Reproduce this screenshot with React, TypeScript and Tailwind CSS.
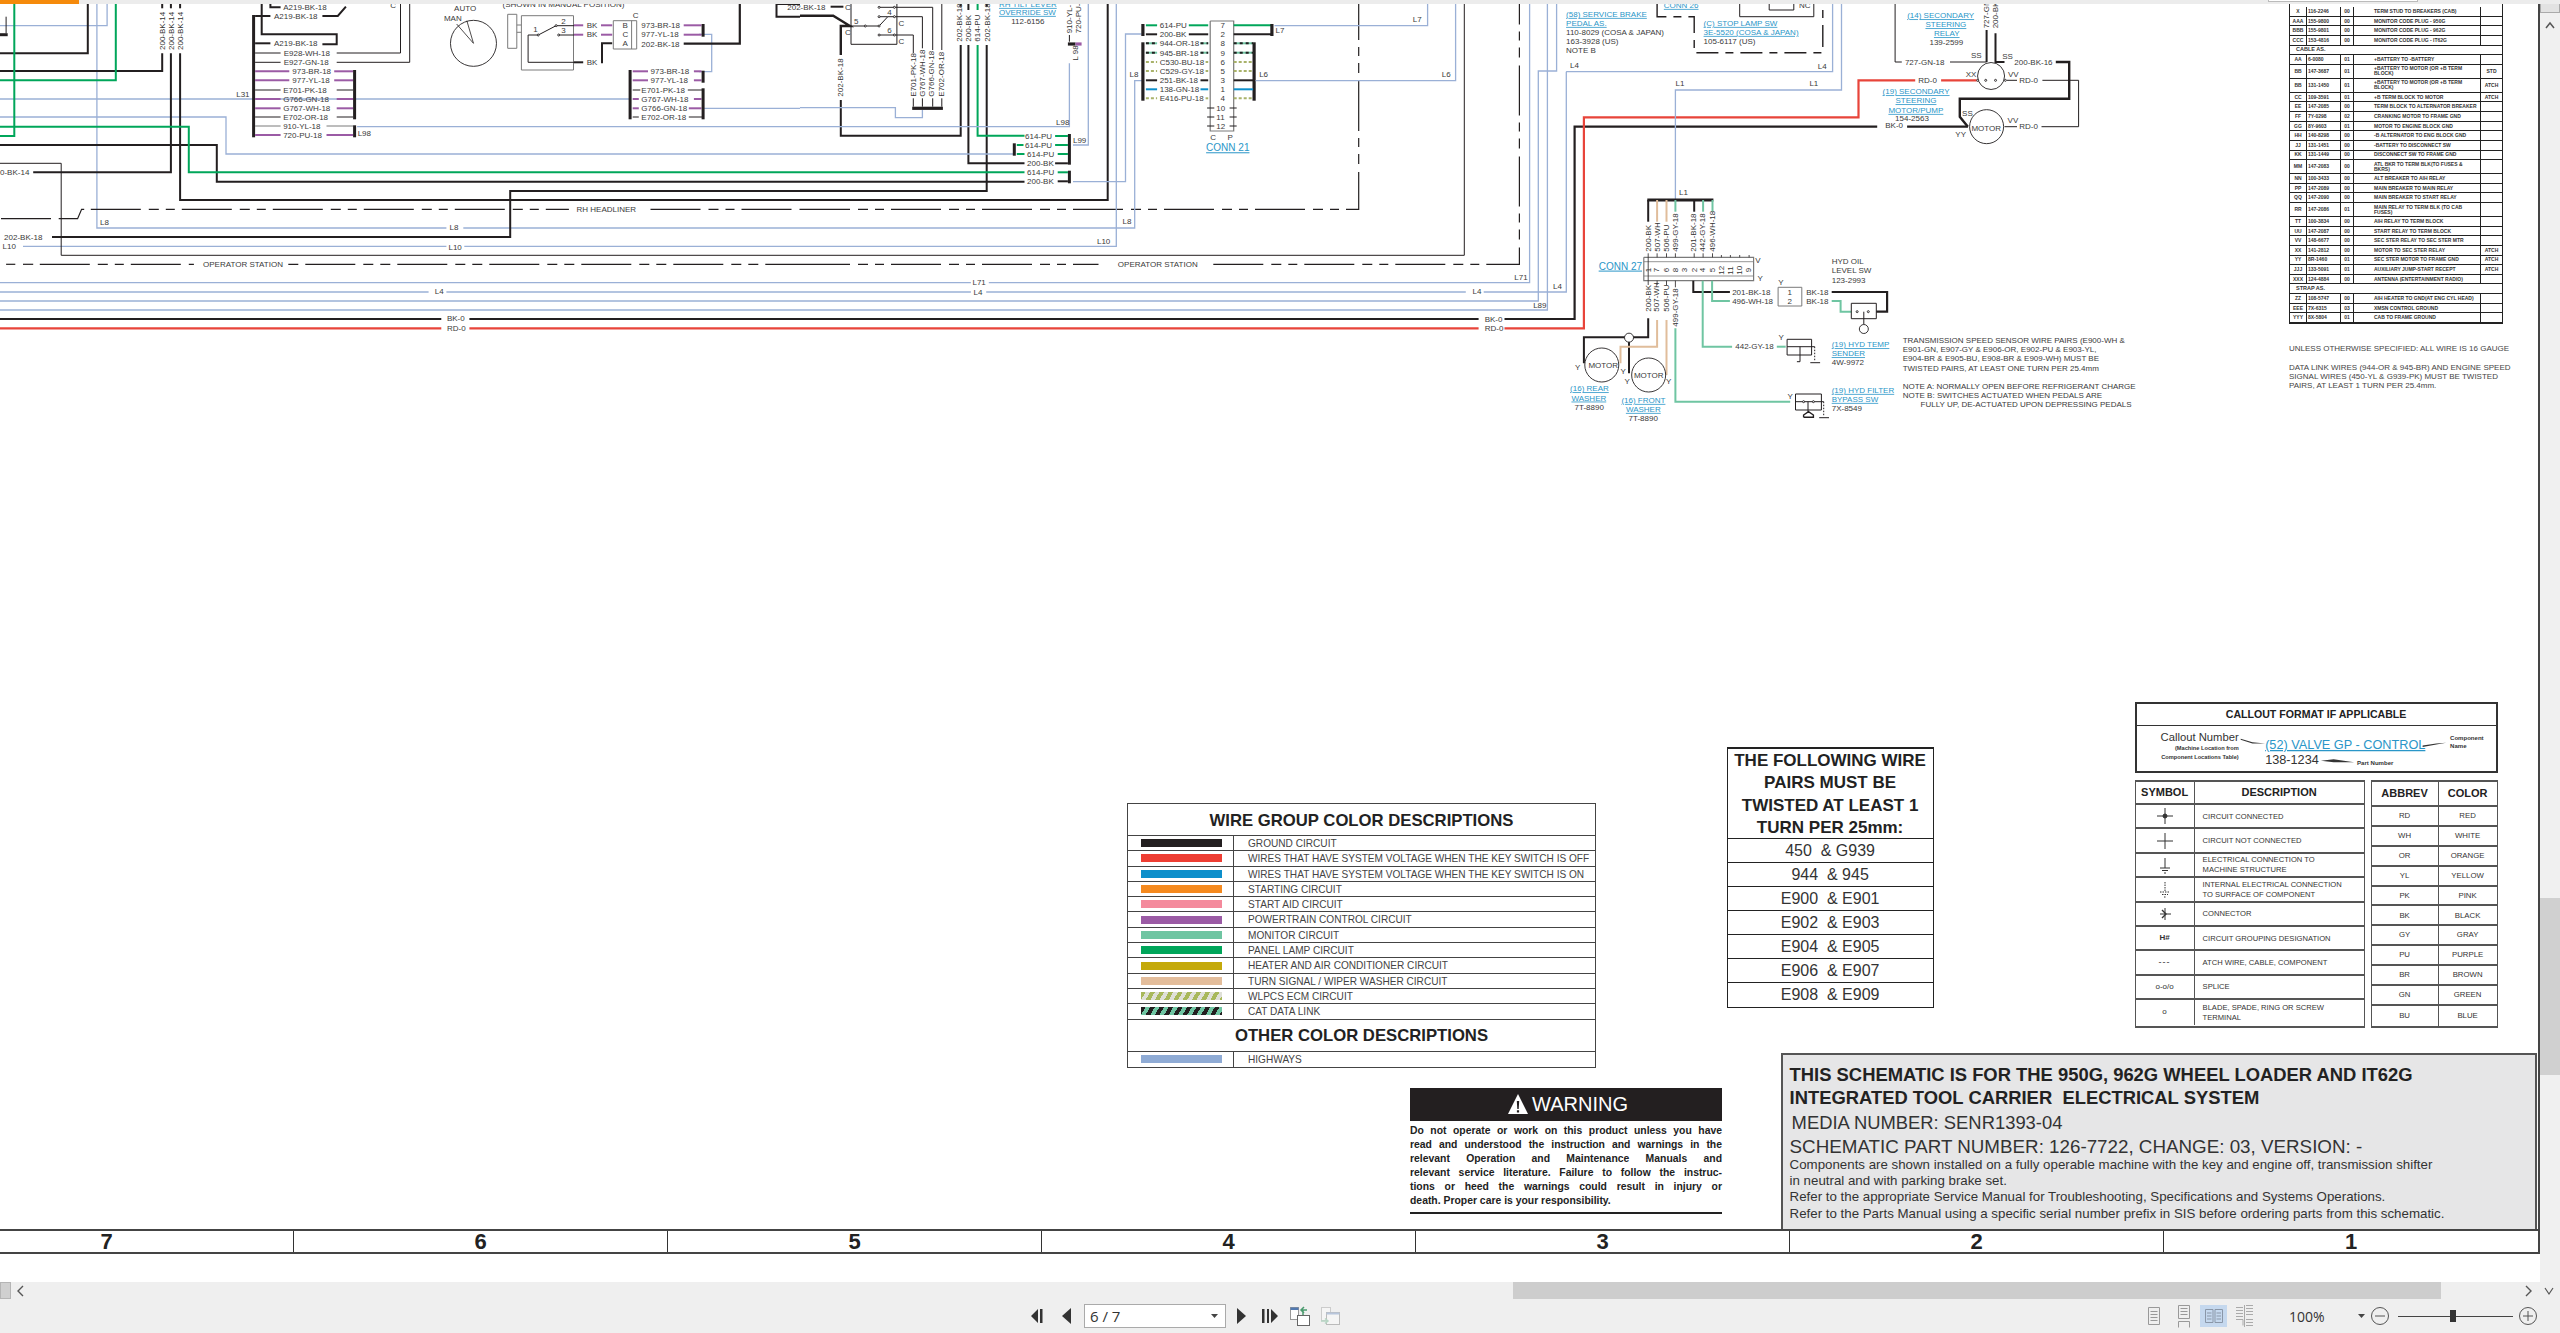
import React from "react";

type Z = 1 | 2 | 3;
const map: Record<Z, [number, number]> = { 1: [0, 1.96], 2: [800, 1.96], 3: [1500, 2.24] };
const px = (z: Z, x: number) => map[z][0] + x / map[z][1];
const py = (y: number) => y / 3;

const H = "#9ab0d6", K = "#231f20", G = "#00a65a", P = "#9b5ba5", R = "#e8443a", T = "#e0bd9b", M = "#6fc5a2", B = "#0d8fcb", O = "#a9b26a", D = "#7a7a7a";

type W = [Z, string, number, number[], string?];
const wires: W[] = [
  [1, H, 1.3, [190, 12, 190, 684, 875, 684]],
  [1, H, 1.3, [908, 684, 1568, 684]],
  [1, H, 1.3, [210, 12, 210, 77, 0, 77]],
  [1, H, 1.3, [0, 297, 1235, 297]],
  [1, H, 1.3, [0, 351, 443, 351, 443, 462, 1568, 462]],
  [1, H, 1.3, [700, 380, 1568, 380]],
  [1, H, 1.3, [45, 739, 875, 739]],
  [1, H, 1.3, [910, 739, 1568, 739]],
  [1, H, 1.3, [0, 848, 1568, 848]],
  [1, H, 1.3, [0, 876, 840, 876]],
  [1, H, 1.3, [875, 876, 1568, 876]],
  [1, H, 1.3, [0, 903, 1568, 903]],
  [1, H, 1.3, [0, 930, 1568, 930]],
  [1, H, 1.3, [1380, 325, 1568, 325]],
  [1, H, 1.3, [1370, 103, 1395, 103, 1395, 215, 1370, 215]],
  [1, K, 1, [0, 490, 120, 490, 120, 766, 1568, 766]],
  [1, K, 2, [172, 12, 172, 160, 0, 160]],
  [1, K, 1, [12, 50, 12, 100]],
  [1, K, 3, [0, 104, 15, 104]],
  [1, K, 2, [318, 12, 318, 25]],
  [1, K, 2, [335, 12, 335, 25]],
  [1, K, 2, [353, 12, 353, 25]],
  [1, K, 2, [318, 160, 318, 213, 0, 213]],
  [1, K, 2, [335, 160, 335, 517, 65, 517]],
  [1, K, 2, [353, 160, 353, 600, 1568, 600]],
  [1, K, 2, [0, 435, 425, 435, 425, 545, 1568, 545]],
  [1, K, 2, [102, 711, 1000, 711, 1000, 573, 1568, 573]],
  [1, G, 2, [28, 12, 28, 408, 0, 408]],
  [1, G, 2, [227, 12, 227, 241, 0, 241]],
  [1, G, 2, [0, 380, 370, 380, 370, 517, 1568, 517]],
  [1, K, 2.2, [0, 957, 865, 957]],
  [1, K, 2.2, [920, 957, 1568, 957]],
  [1, R, 2.2, [0, 985, 865, 985]],
  [1, R, 2.2, [920, 985, 1568, 985]],
  [1, K, 1.2, [178, 628, 1115, 628], "50 8 10 7 9 7"],
  [1, K, 1.2, [1275, 628, 1568, 628], "50 8 10 7 9 7"],
  [1, K, 1.2, [2, 656, 100, 656]],
  [1, K, 1.2, [115, 656, 152, 656, 160, 628, 165, 628]],
  [1, K, 1.2, [78, 793, 380, 793], "50 8 10 7 9 7"],
  [1, K, 1.2, [12, 793, 30, 793]],
  [1, K, 1.2, [45, 793, 65, 793]],
  [1, K, 1.2, [565, 793, 1568, 793], "10 7 50 8 10 7"],
  [1, K, 3, [497, 45, 497, 412]],
  [1, K, 2, [530, 12, 530, 22, 550, 22]],
  [1, K, 2, [513, 12, 513, 103, 660, 103, 660, 133, 632, 133]],
  [1, K, 2, [500, 48, 530, 48]],
  [1, K, 2, [632, 48, 662, 48, 678, 20]],
  [1, K, 2, [500, 130, 530, 130]],
  [1, K, 1, [500, 159, 550, 159]],
  [1, K, 1, [660, 159, 785, 159, 785, 12]],
  [1, K, 1, [500, 187, 550, 187]],
  [1, K, 1, [660, 187, 803, 187, 803, 12]],
  [1, P, 2, [500, 214, 567, 214]],
  [1, P, 2, [655, 214, 692, 214]],
  [1, P, 2, [500, 241, 567, 241]],
  [1, P, 2, [655, 241, 692, 241]],
  [1, K, 1, [500, 270, 550, 270]],
  [1, K, 1, [660, 270, 692, 270]],
  [1, P, 2, [500, 297, 550, 297]],
  [1, P, 2, [660, 297, 692, 297]],
  [1, P, 2, [500, 325, 550, 325]],
  [1, P, 2, [660, 325, 692, 325]],
  [1, K, 1, [500, 351, 550, 351]],
  [1, K, 1, [660, 351, 692, 351]],
  [1, D, 1, [500, 378, 550, 378]],
  [1, D, 1, [640, 378, 692, 378]],
  [1, P, 2, [500, 405, 550, 405]],
  [1, P, 2, [640, 405, 692, 405]],
  [1, K, 3, [695, 210, 695, 358]],
  [1, K, 3, [695, 376, 695, 412]],
  [1, D, 1, [995, 43, 1013, 43, 1013, 145, 995, 145, 995, 43]],
  [1, D, 1, [1013, 75, 1022, 75]],
  [1, D, 1, [1013, 97, 1022, 97]],
  [1, D, 1, [1022, 47, 1124, 47, 1124, 210, 1022, 210, 1022, 47]],
  [1, K, 1, [1035, 105, 1055, 105, 1090, 77, 1125, 77]],
  [1, K, 1, [1035, 105, 1035, 187, 1125, 187]],
  [1, K, 1, [1095, 105, 1125, 105]],
  [1, K, 2, [1125, 187, 1143, 187]],
  [1, P, 2, [1125, 76, 1143, 76]],
  [1, P, 2, [1178, 76, 1200, 76]],
  [1, P, 2, [1125, 104, 1143, 104]],
  [1, P, 2, [1178, 104, 1200, 104]],
  [1, K, 2, [1180, 190, 1180, 130, 1200, 130]],
  [1, D, 1, [1202, 62, 1248, 62, 1248, 147, 1202, 147, 1202, 62]],
  [1, D, 1, [1238, 62, 1238, 147]],
  [1, K, 2.2, [1340, 131, 1450, 131, 1450, 12]],
  [1, P, 2, [1340, 76, 1375, 76]],
  [1, P, 2, [1340, 104, 1375, 104]],
  [1, K, 3, [1378, 72, 1378, 110]],
  [1, K, 3, [1235, 210, 1235, 358]],
  [1, P, 2, [1240, 214, 1270, 214]],
  [1, P, 2, [1240, 241, 1270, 241]],
  [1, K, 1, [1240, 270, 1255, 270]],
  [1, P, 2, [1240, 297, 1252, 297]],
  [1, P, 2, [1240, 325, 1252, 325]],
  [1, K, 1, [1240, 351, 1252, 351]],
  [1, P, 2, [1360, 214, 1375, 214]],
  [1, P, 2, [1360, 241, 1375, 241]],
  [1, K, 1, [1348, 270, 1378, 270]],
  [1, P, 2, [1360, 297, 1375, 297]],
  [1, P, 2, [1350, 325, 1375, 325]],
  [1, K, 1, [1350, 351, 1378, 351]],
  [1, K, 3, [1378, 212, 1378, 248]],
  [1, K, 3, [1378, 265, 1378, 358]],
  [1, K, 2, [1568, 12, 1522, 12, 1522, 50, 1568, 50]],
  [2, K, 2, [60, 20, 85, 20]],
  [2, K, 2.4, [0, 47, 65, 47, 98, 78, 80, 78, 80, 165]],
  [2, K, 2, [80, 300, 80, 407, 315, 407, 315, 135]],
  [2, K, 2, [315, 12, 315, 20]],
  [2, K, 1, [100, 12, 100, 133, 190, 133, 190, 12]],
  [2, K, 1, [100, 78, 155, 78, 172, 50, 190, 50]],
  [2, K, 1, [155, 50, 172, 50]],
  [2, K, 1, [155, 105, 190, 105]],
  [2, K, 1, [155, 22, 190, 22]],
  [2, K, 1, [190, 22, 260, 22, 260, 150]],
  [2, K, 1, [260, 295, 260, 320]],
  [2, K, 1, [190, 50, 240, 50, 240, 145]],
  [2, K, 1, [240, 295, 240, 320]],
  [2, K, 1, [190, 105, 222, 105, 222, 160]],
  [2, K, 1, [222, 295, 222, 320]],
  [2, K, 1, [278, 12, 278, 150]],
  [2, K, 1, [278, 295, 278, 320]],
  [2, K, 3.2, [220, 325, 280, 325]],
  [2, H, 1.3, [0, 323, 187, 323, 187, 353, 240, 353, 240, 330]],
  [2, K, 2, [330, 12, 330, 30]],
  [2, G, 2, [348, 12, 348, 30]],
  [2, K, 2, [366, 12, 366, 20]],
  [2, K, 2, [330, 135, 330, 490, 440, 490]],
  [2, K, 2, [366, 135, 366, 573, 0, 573]],
  [2, G, 2, [348, 135, 348, 407, 440, 407]],
  [2, H, 1.3, [0, 380, 528, 380, 528, 190]],
  [2, K, 1, [528, 105, 528, 125]],
  [2, K, 3.2, [525, 132, 540, 132]],
  [2, P, 3.2, [540, 132, 552, 132]],
  [2, H, 1.3, [565, 12, 565, 435, 535, 435]],
  [2, H, 1.3, [0, 462, 418, 462]],
  [2, G, 2, [0, 517, 440, 517]],
  [2, K, 2, [0, 545, 440, 545]],
  [2, K, 2, [0, 600, 603, 600, 603, 12]],
  [2, K, 1.2, [0, 628, 1095, 628, 1095, 12], "50 8 10 7 9 7"],
  [2, H, 1.3, [0, 684, 656, 684, 656, 242, 672, 242]],
  [2, H, 1.3, [0, 739, 620, 739, 620, 12]],
  [2, K, 1, [0, 766, 1302, 766, 1302, 12]],
  [2, K, 1.2, [0, 793, 585, 793], "50 8 10 7 9 7"],
  [2, K, 1.2, [810, 793, 1410, 793, 1410, 12], "50 8 10 7 9 7"],
  [2, G, 2, [500, 408, 525, 408]],
  [2, G, 2, [500, 435, 525, 435]],
  [2, G, 2, [505, 462, 525, 462]],
  [2, K, 2, [500, 490, 525, 490]],
  [2, G, 2, [505, 517, 525, 517]],
  [2, K, 2, [505, 544, 525, 544]],
  [2, K, 3, [528, 402, 528, 494]],
  [2, K, 3, [528, 512, 528, 550]],
  [2, K, 3, [420, 430, 420, 467]],
  [2, G, 2, [425, 435, 438, 435]],
  [2, G, 2, [425, 462, 440, 462]],
  [2, H, 1.3, [535, 545, 638, 545, 638, 102, 670, 102]],
  [2, D, 1.2, [804, 63, 850, 63, 850, 393, 804, 393, 804, 63]],
  [2, K, 3.2, [672, 72, 672, 108]],
  [2, K, 3.2, [672, 127, 672, 302]],
  [2, G, 2, [678, 76, 700, 76]],
  [2, G, 2, [762, 76, 800, 76]],
  [2, K, 2, [678, 103, 700, 103]],
  [2, K, 2, [762, 103, 800, 103]],
  [2, M, 2, [678, 130, 700, 130]],
  [2, K, 2, [678, 130, 700, 130], "3 3"],
  [2, M, 2, [785, 130, 800, 130]],
  [2, K, 2, [785, 130, 800, 130], "3 3"],
  [2, M, 2, [678, 158, 700, 158]],
  [2, K, 2, [678, 158, 700, 158], "3 3"],
  [2, M, 2, [785, 158, 800, 158]],
  [2, K, 2, [785, 158, 800, 158], "3 3"],
  [2, O, 2, [678, 186, 700, 186], "3 2"],
  [2, O, 2, [795, 186, 800, 186], "3 2"],
  [2, O, 2, [678, 213, 700, 213], "3 2"],
  [2, O, 2, [795, 213, 800, 213], "3 2"],
  [2, K, 2, [678, 241, 700, 241]],
  [2, K, 2, [785, 241, 800, 241]],
  [2, B, 2, [678, 268, 700, 268]],
  [2, B, 2, [785, 268, 800, 268]],
  [2, O, 2, [678, 295, 700, 295], "3 2"],
  [2, O, 2, [795, 295, 800, 295], "3 2"],
  [2, G, 2, [850, 76, 925, 76]],
  [2, K, 2, [850, 103, 925, 103]],
  [2, K, 3.2, [925, 72, 925, 108]],
  [2, H, 1.3, [930, 77, 1230, 77, 1230, 12]],
  [2, K, 3.2, [890, 127, 890, 302]],
  [2, M, 2, [850, 130, 888, 130]],
  [2, K, 2, [850, 130, 888, 130], "3 3"],
  [2, M, 2, [850, 158, 888, 158]],
  [2, K, 2, [850, 158, 888, 158], "3 3"],
  [2, O, 2, [850, 186, 888, 186], "3 2"],
  [2, O, 2, [850, 213, 888, 213], "3 2"],
  [2, K, 2, [850, 241, 888, 241]],
  [2, B, 2, [850, 268, 888, 268]],
  [2, O, 2, [850, 295, 888, 295], "3 2"],
  [2, H, 1.3, [893, 242, 1285, 242, 1285, 12]],
  [2, K, 1, [798, 324, 812, 324]],
  [2, K, 1, [842, 324, 856, 324]],
  [2, K, 1, [798, 351, 812, 351]],
  [2, K, 1, [842, 351, 856, 351]],
  [2, K, 1, [798, 378, 812, 378]],
  [2, K, 1, [842, 378, 856, 378]],
  [2, H, 1.3, [0, 848, 335, 848]],
  [2, H, 1.3, [370, 848, 1430, 848, 1430, 12]],
  [2, H, 1.3, [0, 876, 335, 876]],
  [2, H, 1.3, [365, 876, 1305, 876]],
  [2, H, 1.3, [1340, 876, 1502, 876, 1502, 215]],
  [2, H, 1.3, [0, 903, 1447, 903, 1447, 213, 1483, 213, 1483, 12]],
  [2, H, 1.3, [0, 930, 1465, 930, 1465, 12]],
  [2, K, 2.2, [0, 957, 1330, 957]],
  [2, R, 2.2, [0, 985, 1330, 985]],
  [3, K, 2.2, [10, 957, 167, 957, 167, 380, 845, 380]],
  [3, R, 2.2, [10, 985, 188, 985, 188, 352, 803, 352, 803, 241, 930, 241]],
  [3, K, 2.2, [912, 380, 1048, 380]],
  [3, R, 2.2, [988, 241, 1068, 241]],
  [3, H, 1.3, [148, 215, 745, 215, 745, 12]],
  [3, H, 1.3, [393, 600, 393, 270, 765, 270, 765, 12]],
  [3, K, 1, [885, 12, 885, 186, 900, 186]],
  [3, K, 1, [1008, 186, 1090, 186]],
  [3, K, 2, [1090, 90, 1090, 186]],
  [3, K, 2, [1110, 100, 1110, 186, 1130, 186]],
  [3, K, 2.4, [1245, 186, 1275, 186, 1275, 296, 1030, 296, 1030, 350, 1048, 380]],
  [3, K, 1, [1135, 241, 1158, 241]],
  [3, K, 1, [1215, 241, 1296, 241, 1296, 380, 1213, 380]],
  [3, K, 1, [1130, 380, 1158, 380]],
  [3, K, 1.4, [352, 12, 352, 50, 435, 50, 435, 158, 723, 158, 723, 12], "22 7 8 7"],
  [3, K, 1, [537, 12, 537, 50, 703, 50, 703, 12]],
  [3, K, 1, [603, 12, 603, 30, 658, 30, 658, 12]],
  [3, K, 3, [330, 600, 478, 600]],
  [3, K, 2, [332, 600, 332, 665]],
  [3, T, 2, [352, 600, 352, 665]],
  [3, T, 2, [373, 600, 373, 665]],
  [3, M, 2, [393, 600, 393, 635]],
  [3, K, 2, [435, 600, 435, 635]],
  [3, M, 2, [455, 600, 455, 635]],
  [3, M, 2, [476, 600, 476, 635]],
  [3, D, 1.2, [322, 772, 568, 772, 568, 842, 322, 842, 322, 772]],
  [3, D, 0.8, [322, 785, 568, 785]],
  [3, D, 0.8, [322, 828, 568, 828]],
  [3, K, 0.8, [332, 760, 332, 772, 332, 842, 332, 855]],
  [3, K, 0.8, [352, 760, 352, 772]], [3, K, 0.8, [352, 842, 352, 855]],
  [3, K, 0.8, [373, 760, 373, 772]], [3, K, 0.8, [373, 842, 373, 855]],
  [3, K, 0.8, [393, 760, 393, 772]], [3, K, 0.8, [393, 842, 393, 862]],
  [3, K, 0.8, [435, 760, 435, 772]], [3, K, 0.8, [455, 760, 455, 772]], [3, K, 0.8, [476, 760, 476, 772]],
  [3, K, 0.8, [496, 765, 496, 772]], [3, K, 0.8, [516, 765, 516, 772]], [3, K, 0.8, [537, 765, 537, 772]], [3, K, 0.8, [558, 765, 558, 772]],
  [3, K, 2, [433, 842, 433, 876, 515, 876]],
  [3, M, 2, [454, 842, 454, 1040, 520, 1040]],
  [3, M, 2, [475, 842, 475, 903, 515, 903]],
  [3, M, 2, [620, 1040, 640, 1040]],
  [3, D, 1, [623, 862, 676, 862, 676, 918, 623, 918, 623, 862]],
  [3, K, 2.2, [743, 876, 867, 876, 867, 935, 843, 935]],
  [3, M, 2, [743, 903, 763, 903, 763, 935, 787, 935]],
  [3, K, 1, [787, 910, 843, 910, 843, 956, 787, 956, 787, 910]],
  [3, K, 1, [815, 935, 815, 973]],
  [3, K, 1, [643, 1018, 698, 1018, 698, 1065, 643, 1065, 643, 1018]],
  [3, K, 1, [643, 1040, 705, 1040]],
  [3, K, 1, [705, 1040, 705, 1085], "1.5 1.5"],
  [3, K, 1, [695, 1088, 717, 1088]],
  [3, K, 1, [672, 1040, 672, 1085, 665, 1085]],
  [3, K, 1, [662, 1182, 720, 1182, 720, 1230, 662, 1230, 662, 1182]],
  [3, K, 1, [662, 1205, 725, 1205]],
  [3, K, 1, [725, 1205, 725, 1250], "1.5 1.5"],
  [3, K, 1, [715, 1253, 737, 1253]],
  [3, K, 1, [690, 1205, 690, 1235]],
  [3, K, 1.4, [680, 1252, 702, 1252, 702, 1245, 691, 1235, 680, 1245, 680, 1252]],
  [3, M, 2, [393, 985, 393, 1205, 650, 1205]],
  [3, K, 2, [332, 955, 332, 1012, 188, 1012, 188, 1090]],
  [3, K, 2, [289, 1020, 289, 1120]],
  [3, T, 2, [352, 960, 352, 1040, 270, 1040, 270, 1090]],
  [3, T, 2, [373, 960, 373, 1125]],
];

type LB = [Z, number, number, string, ("v" | "l" | "L" | "m")?];
const labels: LB[] = [
  [1, 555, 21, "A219-BK-18"], [1, 537, 48, "A219-BK-18"], [1, 537, 130, "A219-BK-18"],
  [1, 556, 159, "E928-WH-18"], [1, 556, 187, "E927-GN-18"], [1, 573, 214, "973-BR-18"], [1, 573, 241, "977-YL-18"],
  [1, 555, 270, "E701-PK-18"], [1, 555, 297, "G766-GN-18"], [1, 555, 325, "G767-WH-18"], [1, 555, 351, "E702-OR-18"],
  [1, 555, 378, "910-YL-18"], [1, 555, 405, "720-PU-18"], [1, 463, 282, "L31"], [1, 701, 400, "L98"], [1, 765, 16, "C"],
  [1, 890, 25, "AUTO"], [1, 870, 55, "MAN"], [1, 985, 13, "(SHOWN IN MANUAL POSITION)"],
  [1, 1045, 88, "1"], [1, 1100, 63, "2"], [1, 1100, 90, "3"],
  [1, 1150, 76, "BK"], [1, 1150, 102, "BK"], [1, 1150, 186, "BK"],
  [1, 1240, 46, "C"], [1, 1220, 76, "B"], [1, 1220, 103, "C"], [1, 1220, 130, "A"],
  [1, 1257, 76, "973-BR-18"], [1, 1257, 103, "977-YL-18"], [1, 1257, 131, "202-BK-18"],
  [1, 1275, 214, "973-BR-18"], [1, 1275, 241, "977-YL-18"], [1, 1257, 270, "E701-PK-18"], [1, 1257, 297, "G767-WH-18"],
  [1, 1257, 325, "G766-GN-18"], [1, 1257, 351, "E702-OR-18"],
  [1, 318, 150, "200-BK-14", "v"], [1, 335, 150, "200-BK-14", "v"], [1, 353, 150, "200-BK-14", "v"],
  [1, 0, 516, "0-BK-14"], [1, 8, 711, "202-BK-18"], [1, 5, 738, "L10"], [1, 196, 666, "L8"], [1, 881, 682, "L8"], [1, 879, 741, "L10"],
  [1, 852, 874, "L4"], [1, 876, 955, "BK-0"], [1, 876, 985, "RD-0"], [1, 398, 793, "OPERATOR STATION"], [1, 1130, 628, "RH HEADLINER"],
  [1, 1543, 20, "202-BK-18"],
  [2, 88, 20, "C"], [2, 106, 63, "5"], [2, 88, 95, "C"], [2, 171, 37, "4"], [2, 171, 90, "6"], [2, 193, 68, "C"], [2, 193, 122, "C"],
  [2, 78, 290, "202-BK-18", "v"], [2, 222, 290, "E701-PK-18", "v"], [2, 240, 290, "G767-WH-18", "v"], [2, 258, 290, "G766-GN-18", "v"], [2, 276, 290, "E702-OR-18", "v"],
  [2, 312, 125, "202-BK-18", "v"], [2, 330, 125, "200-BK", "v"], [2, 348, 125, "614-PU", "v"], [2, 366, 125, "202-BK-18", "v"],
  [2, 528, 100, "910-YL-", "v"], [2, 546, 100, "720-PU-", "v"], [2, 540, 182, "L 98", "v"],
  [2, 390, 12, "RH TILT LEVER", "l"], [2, 390, 36, "OVERRIDE SW", "l"], [2, 414, 63, "112-6156"],
  [2, 502, 367, "L98"], [2, 535, 420, "L99"], [2, 632, 664, "L8"], [2, 582, 723, "L10"], [2, 646, 222, "L8"],
  [2, 441, 408, "614-PU"], [2, 441, 435, "614-PU"], [2, 445, 462, "614-PU"], [2, 445, 490, "200-BK"], [2, 445, 517, "614-PU"], [2, 445, 544, "200-BK"],
  [2, 705, 76, "614-PU"], [2, 705, 102, "200-BK"], [2, 705, 130, "944-OR-18"], [2, 705, 158, "945-BR-18"], [2, 705, 186, "C530-BU-18"], [2, 705, 213, "C529-GY-18"], [2, 705, 241, "251-BK-18"], [2, 705, 268, "138-GN-18"], [2, 705, 295, "E416-PU-18"],
  [2, 824, 75, "7"], [2, 824, 102, "2"], [2, 824, 130, "8"], [2, 824, 158, "9"], [2, 824, 186, "6"], [2, 824, 213, "5"], [2, 824, 241, "3"], [2, 824, 268, "1"], [2, 824, 295, "4"], [2, 816, 324, "10"], [2, 816, 351, "11"], [2, 816, 378, "12"],
  [2, 804, 412, "C"], [2, 838, 412, "P"], [2, 796, 443, "CONN 21", "L"],
  [2, 932, 90, "L7"], [2, 1201, 58, "L7"], [2, 900, 222, "L6"], [2, 1258, 222, "L6"],
  [2, 623, 793, "OPERATOR STATION"], [2, 338, 847, "L71"], [2, 1400, 830, "L71"], [2, 340, 876, "L4"], [2, 1318, 874, "L4"], [2, 1476, 858, "L4"], [2, 1437, 914, "L89"],
  [2, 1342, 957, "BK-0"], [2, 1342, 985, "RD-0"],
  [3, 148, 42, "(58) SERVICE BRAKE", "l"], [3, 148, 69, "PEDAL AS.", "l"], [3, 148, 96, "110-8029 (COSA & JAPAN)"], [3, 148, 123, "163-3928 (US)"], [3, 148, 150, "NOTE B"],
  [3, 367, 15, "CONN 26", "l"], [3, 670, 15, "NC"], [3, 456, 69, "(C) STOP LAMP SW", "l"], [3, 456, 96, "3E-5520 (COSA & JAPAN)", "l"], [3, 456, 123, "105-6117 (US)"],
  [3, 157, 196, "L4"], [3, 712, 198, "L4"], [3, 393, 250, "L1"], [3, 693, 250, "L1"], [3, 401, 576, "L1"],
  [3, 912, 46, "(14) SECONDARY", "l"], [3, 953, 73, "STEERING", "l"], [3, 972, 100, "RELAY", "l"], [3, 962, 126, "139-2599"],
  [3, 857, 274, "(19) SECONDARY", "l"], [3, 886, 301, "STEERING", "l"], [3, 870, 330, "MOTOR/PUMP", "l"], [3, 885, 354, "154-2563"],
  [3, 907, 186, "727-GN-18"], [3, 1152, 186, "200-BK-16"], [3, 1055, 165, "SS"], [3, 1125, 168, "SS"], [3, 1043, 222, "XX"], [3, 1138, 222, "VV"],
  [3, 937, 241, "RD-0"], [3, 1163, 241, "RD-0"], [3, 1163, 379, "RD-0"], [3, 863, 376, "BK-0"], [3, 1035, 338, "SS"], [3, 1137, 360, "VV"], [3, 1020, 402, "YY"], [3, 1056, 385, "MOTOR"],
  [3, 1090, 85, "727-GN", "v"], [3, 1110, 85, "200-BK", "v"],
  [3, 332, 755, "200-BK", "v"], [3, 352, 755, "507-WH", "v"], [3, 373, 755, "506-PU", "v"], [3, 393, 755, "499-GY-18", "v"], [3, 433, 755, "201-BK-18", "v"], [3, 453, 755, "442-GY-18", "v"], [3, 475, 755, "496-WH-18", "v"],
  [3, 332, 805, "1", "m"], [3, 351, 805, "7", "m"], [3, 372, 805, "6", "m"], [3, 393, 805, "8", "m"], [3, 413, 805, "3", "m"], [3, 434, 805, "2", "m"], [3, 454, 805, "4", "m"], [3, 475, 805, "5", "m"], [3, 495, 812, "12", "m"], [3, 515, 812, "11", "m"], [3, 536, 812, "10", "m"], [3, 557, 805, "9", "m"],
  [3, 572, 780, "V"], [3, 577, 835, "Y"], [3, 221, 798, "CONN 27", "L"],
  [3, 332, 935, "200-BK", "v"], [3, 351, 935, "507-WH", "v"], [3, 372, 935, "506-PU", "v"], [3, 393, 980, "499-GY-18", "v"],
  [3, 520, 875, "201-BK-18"], [3, 520, 903, "496-WH-18"], [3, 527, 1038, "442-GY-18"], [3, 623, 846, "Y"], [3, 644, 876, "1"], [3, 644, 904, "2"], [3, 686, 876, "BK-18"], [3, 686, 903, "BK-18"],
  [3, 743, 783, "HYD OIL"], [3, 743, 811, "LEVEL SW"], [3, 743, 840, "123-2993"], [3, 624, 1012, "Y"],
  [3, 743, 1033, "(19) HYD TEMP", "l"], [3, 743, 1060, "SENDER", "l"], [3, 743, 1087, "4W-9972"],
  [3, 644, 1188, "Y"], [3, 743, 1170, "(19) HYD FILTER", "l"], [3, 743, 1197, "BYPASS SW", "l"], [3, 743, 1224, "7X-8549"],
  [3, 198, 1095, "MOTOR"], [3, 300, 1125, "MOTOR"], [3, 168, 1100, "Y"], [3, 270, 1112, "Y"], [3, 279, 1143, "Y"], [3, 372, 1143, "Y"],
  [3, 157, 1165, "(16) REAR", "l"], [3, 160, 1193, "WASHER", "l"], [3, 167, 1221, "7T-8890"], [3, 272, 1200, "(16) FRONT", "l"], [3, 282, 1227, "WASHER", "l"], [3, 288, 1254, "7T-8890"],
  [3, 902, 1020, "TRANSMISSION SPEED SENSOR WIRE PAIRS (E900-WH &"], [3, 902, 1047, "E901-GN, E907-GY & E906-OR, E902-PU & E903-YL,"], [3, 902, 1074, "E904-BR & E905-BU, E908-BR & E909-WH) MUST BE"], [3, 902, 1104, "TWISTED PAIRS, AT LEAST ONE TURN PER 25.4mm"],
  [3, 902, 1158, "NOTE A: NORMALLY OPEN BEFORE REFRIGERANT CHARGE"], [3, 902, 1185, "NOTE B: SWITCHES ACTUATED WHEN PEDALS ARE"], [3, 942, 1212, "FULLY UP, DE-ACTUATED UPON DEPRESSING PEDALS"],
];

const circles: [Z, number, number, number][] = [
  [1, 928, 130, 23], [3, 1100, 228, 13.5], [3, 1090, 380, 17], [3, 228, 1095, 17], [3, 333, 1125, 17], [3, 289, 1013, 4.5], [3, 815, 987, 4.5],
  [1, 1055, 105, 1], [1, 1090, 77, 1], [1, 1095, 105, 1], [2, 128, 78, 1], [2, 155, 78, 1], [2, 155, 50, 1], [2, 155, 105, 1], [2, 155, 22, 1], [2, 185, 22, 1], [2, 185, 50, 1], [2, 185, 105, 1],
  [3, 1070, 241, 1], [3, 1132, 241, 1], [3, 1088, 241, 1], [3, 1110, 241, 1], [3, 800, 935, 1], [3, 825, 935, 1], [3, 680, 1205, 1], [3, 702, 1205, 1],
];

function Schematic() {
  return (
    <svg viewBox="0 4 2540 440" width={2540} height={440} className="block">
      {wires.map(([z, c, w, pts, dash], i) => {
        const s: string[] = [];
        for (let j = 0; j < pts.length; j += 2) s.push(`${px(z, pts[j]).toFixed(1)},${py(pts[j + 1]).toFixed(1)}`);
        return <polyline key={i} points={s.join(" ")} fill="none" stroke={c} strokeWidth={w} strokeDasharray={dash} />;
      })}
      {circles.map(([z, x, y, r], i) => (
        <circle key={i} cx={px(z, x)} cy={py(y)} r={r} fill="#fff" stroke={K} strokeWidth={0.9} />
      ))}
      <polyline points={`${px(1, 895)},${py(72)} ${px(1, 928)},${py(130)} ${px(1, 915)},${py(62)}`} fill="none" stroke={K} strokeWidth={0.8} />
      {labels.map(([z, x, y, t, k], i) => {
        const X = px(z, x);
        const Y = py(y);
        if (k === "v" || k === "m")
          return (
            <text key={i} x={X + 2.8} y={k === "m" ? Y + 4 : Y} fontSize={8} fill="#333" transform={`rotate(-90 ${X + 2.8} ${k === "m" ? Y + 4 : Y})`}>
              {t}
            </text>
          );
        if (k === "l") return <text key={i} x={X} y={Y + 2.9} fontSize={8} fill="#2a96c8" textDecoration="underline">{t}</text>;
        if (k === "L") return <text key={i} x={X} y={Y + 3.6} fontSize={10} fill="#2a96c8" textDecoration="underline">{t}</text>;
        return <text key={i} x={X} y={Y + 2.9} fontSize={8} fill="#3a3a3a">{t}</text>;
      })}
    </svg>
  );
}

type PartRow = { a?: string; b?: string; c?: string; d?: string; e?: string; head?: string; tall?: boolean };
const parts: PartRow[] = [
  { a: "X", b: "116-2246", c: "00", d: "TERM STUD TO BREAKERS (CAB)" },
  { a: "AAA", b: "155-9800", c: "00", d: "MONITOR CODE PLUG - 950G" },
  { a: "BBB", b: "155-9801", c: "00", d: "MONITOR CODE PLUG - 962G" },
  { a: "CCC", b: "153-4816", c: "00", d: "MONITOR CODE PLUG - IT62G" },
  { head: "CABLE AS." },
  { a: "AA", b: "6-0080", c: "01", d: "+BATTERY TO -BATTERY" },
  { a: "BB", b: "147-3687", c: "01", d: "+BATTERY TO MOTOR (OR +B TERM BLOCK)", e: "STD", tall: true },
  { a: "BB", b: "131-1450", c: "01", d: "+BATTERY TO MOTOR (OR +B TERM BLOCK)", e: "ATCH", tall: true },
  { a: "CC", b: "109-3591", c: "01", d: "+B TERM BLOCK TO MOTOR", e: "ATCH" },
  { a: "EE", b: "147-2085", c: "00", d: "TERM BLOCK TO ALTERNATOR BREAKER" },
  { a: "FF", b: "7Y-0298", c: "02", d: "CRANKING MOTOR TO FRAME GND" },
  { a: "GG", b: "8Y-9603", c: "01", d: "MOTOR TO ENGINE BLOCK GND" },
  { a: "HH", b: "140-8298", c: "00", d: "-B ALTERNATOR TO ENG BLOCK GND" },
  { a: "JJ", b: "131-1451", c: "00", d: "-BATTERY TO DISCONNECT SW" },
  { a: "KK", b: "131-1449", c: "00", d: "DISCONNECT SW TO FRAME GND" },
  { a: "MM", b: "147-2083", c: "00", d: "ATL BKR TO TERM BLK(TO FUSES & BKRS)", tall: true },
  { a: "NN", b: "100-3433", c: "00", d: "ALT BREAKER TO AIH RELAY" },
  { a: "PP", b: "147-2089", c: "00", d: "MAIN BREAKER TO MAIN RELAY" },
  { a: "QQ", b: "147-2090", c: "00", d: "MAIN BREAKER TO START RELAY" },
  { a: "RR", b: "147-2086", c: "01", d: "MAIN RELAY TO TERM BLK (TO CAB FUSES)", tall: true },
  { a: "TT", b: "100-3834", c: "00", d: "AIH RELAY TO TERM BLOCK" },
  { a: "UU", b: "147-2087", c: "00", d: "START RELAY TO TERM BLOCK" },
  { a: "VV", b: "148-6677", c: "00", d: "SEC STER RELAY TO SEC STER MTR" },
  { a: "XX", b: "141-2812", c: "00", d: "MOTOR TO SEC STER RELAY", e: "ATCH" },
  { a: "YY", b: "8R-1460", c: "01", d: "SEC STER MOTOR TO FRAME GND", e: "ATCH" },
  { a: "JJJ", b: "133-5091", c: "01", d: "AUXILIARY JUMP-START RECEPT", e: "ATCH" },
  { a: "XXX", b: "124-4884", c: "00", d: "ANTENNA (ENTERTAINMENT RADIO)" },
  { head: "STRAP AS." },
  { a: "ZZ", b: "108-5747", c: "00", d: "AIH HEATER TO GND(AT ENG CYL HEAD)" },
  { a: "EEE", b: "7X-6315", c: "03", d: "XMSN CONTROL GROUND" },
  { a: "YYY", b: "8X-5804", c: "01", d: "CAB TO FRAME GROUND" },
];

function PartsTable() {
  return (
    <div className="absolute left-[2289px] top-0 w-[214px] text-[#333]">
      <div className="border-x-[1.5px] border-b-[1.5px] border-[#222] font-bold text-[5px] leading-[5px]">
        {parts.map((r, i) =>
          r.head ? (
            <div key={i} className="h-[9.64px] border-b border-[#222] pl-[6px] flex items-center text-[5.5px]">{r.head}</div>
          ) : (
            <div key={i} className={`grid grid-cols-[17px_34px_13px_127px_1fr] border-b border-[#222] ${i === 0 ? "h-[12.7px] pt-[3px]" : r.tall ? "h-[14px]" : "h-[9.64px]"}`}>
              <div className="border-r border-[#222] flex items-center justify-center">{r.a}</div>
              <div className="border-r border-[#222] flex items-center pl-[1px]">{r.b}</div>
              <div className="border-r border-[#222] flex items-center justify-center">{r.c}</div>
              <div className="border-r-[1.5px] border-[#222] flex items-center pl-[20px] pr-[1px]">{r.d}</div>
              <div className="flex items-center justify-center">{r.e}</div>
            </div>
          )
        )}
      </div>
      <div className="mt-[20px] text-[8px] leading-[9px] text-[#444] whitespace-nowrap">UNLESS OTHERWISE SPECIFIED: ALL WIRE IS 16 GAUGE</div>
      <div className="mt-[10px] text-[8px] leading-[9px] text-[#444] whitespace-nowrap">
        DATA LINK WIRES (944-OR &amp; 945-BR) AND ENGINE SPEED
        <br />
        SIGNAL WIRES (450-YL &amp; G939-PK) MUST BE TWISTED
        <br />
        PAIRS, AT LEAST 1 TURN PER 25.4mm.
      </div>
    </div>
  );
}

const groupRows: [string, string][] = [
  ["bg-[#231f20]", "GROUND CIRCUIT"],
  ["bg-[#ee3e33]", "WIRES THAT HAVE SYSTEM VOLTAGE WHEN THE KEY SWITCH IS OFF"],
  ["bg-[#0d8fcb]", "WIRES THAT HAVE SYSTEM VOLTAGE WHEN THE KEY SWITCH IS ON"],
  ["bg-[#f58a1f]", "STARTING CIRCUIT"],
  ["bg-[#f48a9c]", "START AID CIRCUIT"],
  ["bg-[#9b5ba5]", "POWERTRAIN CONTROL CIRCUIT"],
  ["bg-[#6fc5a2]", "MONITOR CIRCUIT"],
  ["bg-[#00a65a]", "PANEL LAMP CIRCUIT"],
  ["bg-[#c4a90a]", "HEATER AND AIR CONDITIONER CIRCUIT"],
  ["bg-[#e3bd9b]", "TURN SIGNAL / WIPER WASHER CIRCUIT"],
  ["bg-[repeating-linear-gradient(120deg,#a8b85a_0px,#a8b85a_4px,#dfe0d8_4px,#dfe0d8_8px)]", "WLPCS ECM CIRCUIT"],
  ["bg-[repeating-linear-gradient(120deg,#231f20_0px,#231f20_4px,#6fc5a2_4px,#6fc5a2_8px)]", "CAT DATA LINK"],
];

function SwatchRow({ swatch, text, last }: { swatch: string; text: string; last?: boolean }) {
  return (
    <div className={`flex h-[15.3px] ${last ? "" : "border-b border-[#444]"}`}>
      <div className="w-[106px] border-r border-[#444] flex items-center pl-[13px]">
        <div className={`w-[81px] h-[8px] ${swatch}`} />
      </div>
      <div className="pl-[14px] text-[10.1px] leading-[15px] text-[#444] whitespace-nowrap">{text}</div>
    </div>
  );
}

function WireTable() {
  return (
    <div className="w-[469px] border border-[#444] border-t-[1.5px] bg-white">
      <div className="h-[32px] pt-[2px] border-b border-[#444] flex items-center justify-center font-bold text-[16.7px] text-[#222] whitespace-nowrap">WIRE GROUP COLOR DESCRIPTIONS</div>
      {groupRows.map(([s, t]) => (
        <SwatchRow key={t} swatch={s} text={t} />
      ))}
      <div className="h-[32px] border-b border-[#444] flex items-center justify-center font-bold text-[16.7px] text-[#222]">OTHER COLOR DESCRIPTIONS</div>
      <SwatchRow swatch="bg-[#8fabd5]" text="HIGHWAYS" last />
    </div>
  );
}

const warningLines = [
  "Do not operate or work on this product unless you have",
  "read and understood the instruction and warnings in the",
  "relevant Operation and Maintenance Manuals and",
  "relevant service literature. Failure to follow the instruc-",
  "tions or heed the warnings could result in injury or",
];

function Warning() {
  return (
    <div className="w-[312px]">
      <div className="h-[33px] bg-[#231f20] flex items-center justify-center gap-[3px] pl-[3px] text-white text-[20px]">
        <svg width="22" height="22" viewBox="0 0 22 22">
          <path d="M11 1 L21 21 L1 21 Z" fill="#fff" />
          <path d="M9.8 8h2.4l-.5 8h-1.4z M9.900 17.300h2.200v2.200H9.900z" fill="#231f20" />
        </svg>
        <span>WARNING</span>
      </div>
      <div className="mt-[3px] pb-[4px] border-b-2 border-[#222] font-bold text-[10.4px] leading-[14px] text-[#222]">
        {warningLines.map((l) => (
          <div key={l} className="text-justify [text-align-last:justify]">{l}</div>
        ))}
        <div>death. Proper care is your responsibility.</div>
      </div>
    </div>
  );
}

const pairs = ["450  & G939", "944  & 945", "E900  & E901", "E902  & E903", "E904  & E905", "E906  & E907", "E908  & E909"];

function TwistedTable() {
  return (
    <div className="w-[207px] border-x border-[#222] border-t-2 border-b border-t-[#222] border-b-[#222] text-[#222] text-center">
      <div className="h-[90px] border-b border-[#222] font-bold text-[17px] leading-[22.3px] pt-[1px] whitespace-nowrap">
        THE FOLLOWING WIRE
        <br />
        PAIRS MUST BE
        <br />
        TWISTED AT LEAST 1
        <br />
        TURN PER 25mm:
      </div>
      {pairs.map((p, i) => (
        <div key={p} className={`h-[24px] leading-[23px] text-[16px] text-[#333] whitespace-pre ${i < 6 ? "border-b border-[#222]" : ""}`}>{p}</div>
      ))}
    </div>
  );
}

function Callout() {
  return (
    <div className="w-[363px] h-[71px] border-2 border-[#333] flex flex-col">
      <div className="h-[22px] border-b border-[#333] flex items-center justify-center font-bold text-[10.6px] text-[#222] whitespace-nowrap">CALLOUT FORMAT IF APPLICABLE</div>
      <svg viewBox="2135 725 361 46" width={359} height={45} className="block">
        <g fill="#333">
          <text x="2236" y="740" fontSize="11.5" textAnchor="end">Callout Number</text>
          <text x="2236" y="749.5" fontSize="5.8" fontWeight="700" textAnchor="end">(Machine Location from</text>
          <text x="2236" y="758.5" fontSize="5.8" fontWeight="700" textAnchor="end">Component Locations Table)</text>
          <text x="2263" y="748.5" fontSize="13" fill="#2a96c8" textDecoration="underline">(52) VALVE GP - CONTROL</text>
          <text x="2263" y="764" fontSize="13">138-1234</text>
          <text x="2357" y="764.5" fontSize="6.2" fontWeight="700">Part Number</text>
          <text x="2452" y="739" fontSize="6.2" fontWeight="700">Component</text>
          <text x="2452" y="748" fontSize="6.2" fontWeight="700">Name</text>
          <path d="M2238 738 L2250 741.5 L2263 743 L2250 742.8 L2238 739Z" />
          <path d="M2424 745 L2438 743 L2448 742 L2438 744 L2424 746.5Z" />
          <path d="M2320 760.5 L2333 759 L2354 762 L2333 762 Z" />
        </g>
      </svg>
    </div>
  );
}

function SymIcon({ k }: { k: number }) {
  const s = "#333";
  if (k === 5) return <span className="font-bold text-[8px]">H#</span>;
  if (k === 6) return <span className="tracking-[1px] text-[9px]">---</span>;
  if (k === 7) return <span className="text-[8px]">o-o/o</span>;
  if (k === 8) return <span className="text-[8px]">o</span>;
  return (
    <svg width="18" height="20" viewBox="0 0 18 20" stroke={s} fill="none" strokeWidth="1">
      {k === 0 && (<><path d="M1 10H17M9 2V18" /><circle cx="9" cy="10" r="2" fill={s} /></>)}
      {k === 1 && <path d="M1 10H17M9 2V18" />}
      {k === 2 && <path d="M9 3V13M4 13H14M6 15.500H12M8 18H10" />}
      {k === 3 && <path d="M9 3V13M4 13H14M6 15.500H12M8 18H10" strokeDasharray="1.500 1" />}
      {k === 4 && (<><path d="M4 10H15M9 4V16" /><path d="M6 6L10 10L6 14" strokeWidth="1.400" /></>)}
    </svg>
  );
}

const symbols = ["CIRCUIT CONNECTED", "CIRCUIT NOT CONNECTED", "ELECTRICAL CONNECTION TO\nMACHINE STRUCTURE", "INTERNAL ELECTRICAL CONNECTION\nTO SURFACE OF COMPONENT", "CONNECTOR", "CIRCUIT GROUPING DESIGNATION", "ATCH WIRE, CABLE, COMPONENT", "SPLICE", "BLADE, SPADE, RING OR SCREW\nTERMINAL"];
const abbrevs = [["RD", "RED"], ["WH", "WHITE"], ["OR", "ORANGE"], ["YL", "YELLOW"], ["PK", "PINK"], ["BK", "BLACK"], ["GY", "GRAY"], ["PU", "PURPLE"], ["BR", "BROWN"], ["GN", "GREEN"], ["BU", "BLUE"]];

function SymbolTable() {
  return (
    <div className="w-[230px] border border-[#555] border-t-2 border-b-2 text-[#333]">
      <div className="h-[23px] flex border-b-2 border-[#555] font-bold text-[11px] text-[#222]">
        <div className="w-[59px] border-r border-[#555] flex items-center justify-center">SYMBOL</div>
        <div className="flex-1 flex items-center justify-center">DESCRIPTION</div>
      </div>
      {symbols.map((d, i) => (
        <div key={d} className={`h-[24.4px] flex ${i < 8 ? "border-b-2 border-[#555]" : ""}`}>
          <div className="w-[59px] border-r border-[#555] flex items-center justify-center"><SymIcon k={i} /></div>
          <div className="flex-1 flex items-center pl-[8px] pt-[1px] text-[7.6px] leading-[10px] whitespace-pre">{d}</div>
        </div>
      ))}
    </div>
  );
}

function AbbrevTable() {
  return (
    <div className="w-[127px] border border-[#555] border-t-2 border-b-2 text-[#333]">
      <div className="h-[25px] flex border-b-2 border-[#555] font-bold text-[11px] text-[#222]">
        <div className="w-[67px] border-r border-[#555] flex items-center justify-center">ABBREV</div>
        <div className="flex-1 flex items-center justify-center">COLOR</div>
      </div>
      {abbrevs.map(([a, c], i) => (
        <div key={a} className={`h-[19.9px] flex text-[7.8px] ${i < 10 ? "border-b-2 border-[#555]" : ""}`}>
          <div className="w-[67px] border-r border-[#555] flex items-center justify-center">{a}</div>
          <div className="flex-1 flex items-center justify-center">{c}</div>
        </div>
      ))}
    </div>
  );
}

function TitleBlock() {
  return (
    <div className="ml-[54px] w-[756px] h-[176px] bg-[#e6e6e7] border-2 border-[#555] border-b-0 pl-[7px] text-[#222] whitespace-nowrap">
      <div className="mt-[8px] font-bold text-[18.4px] leading-[23px]">THIS SCHEMATIC IS FOR THE 950G, 962G WHEEL LOADER AND IT62G</div>
      <div className="font-bold text-[18.4px] leading-[23px]">INTEGRATED TOOL CARRIER&nbsp; ELECTRICAL SYSTEM</div>
      <div className="mt-[3px] ml-[2px] text-[18.4px] leading-[22px] text-[#333]">MEDIA NUMBER: SENR1393-04</div>
      <div className="mt-[2px] text-[18.8px] leading-[22px] text-[#333]">SCHEMATIC PART NUMBER: 126-7722, CHANGE: 03, VERSION: -</div>
      <div className="-mt-[1px] text-[13.3px] leading-[16.2px] text-[#333]">
        Components are shown installed on a fully operable machine with the key and engine off, transmission shifter
        <br />
        in neutral and with parking brake set.
        <br />
        Refer to the appropriate Service Manual for Troubleshooting, Specifications and Systems Operations.
        <br />
        Refer to the Parts Manual using a specific serial number prefix in SIS before ordering parts from this schematic.
      </div>
    </div>
  );
}

function Ruler() {
  return (
    <div className="h-[25px] border-y-2 border-[#444] flex -ml-[80px] font-bold text-[22px] leading-[21px] text-[#222] w-[2619px]">
      {["7", "6", "5", "4", "3", "2", "1"].map((n, i) => (
        <div key={n} className={`w-[374px] text-center ${i < 6 ? "border-r border-[#333]" : ""}`}>{n}</div>
      ))}
    </div>
  );
}

function Tb({ d }: { d: string }) {
  return (
    <svg width="16" height="16" viewBox="0 0 16 16" fill="#333">
      <path d={d} />
    </svg>
  );
}

function DocIcon({ a, b }: { a: string; b: string }) {
  return (
    <svg width="20" height="24" viewBox="0 0 20 24" fill="none" stroke={a} strokeWidth="1">
      <path d={b} />
    </svg>
  );
}

function Toolbar() {
  return (
    <div className="h-[51px] bg-[#efefef] flex flex-col">
      <div className="h-[17px] flex items-center">
        <div className="w-[11px] h-[17px] bg-[#d0d0d0] border border-[#b5b5b5]" />
        <svg width="10" height="12" viewBox="0 0 10 12" className="ml-[5px]" fill="none" stroke="#555" strokeWidth="1.4"><path d="M7 1L2 6L7 11" /></svg>
        <div className="ml-[1487px] w-[928px] h-[17px] bg-[#cdcdcd]" />
        <svg width="10" height="12" viewBox="0 0 10 12" className="ml-[82px]" fill="none" stroke="#555" strokeWidth="1.4"><path d="M3 1L8 6L3 11" /></svg>
        <svg width="12" height="10" viewBox="0 0 12 10" className="ml-[10px]" fill="none" stroke="#555" strokeWidth="1.2"><path d="M2 2L6 8L10 2" /></svg>
      </div>
      <div className="flex-1 flex items-center relative">
        <div className="ml-[1031px]"><Tb d="M7 1v14L0 8z M9 1h2.500v14H9z" /></div>
        <div className="ml-[15px]"><svg width="10" height="16" viewBox="0 0 10 16" fill="#333"><path d="M9 0v16L0 8z" /></svg></div>
        <div className="ml-[12px] w-[142px] h-[24px] bg-white border border-[#aaa] flex items-center pl-[5px] pr-[7px] justify-between text-[15px] text-[#333] font-['Open_Sans',sans-serif]">
          <span className="whitespace-pre">6 / 7</span>
          <svg width="7" height="4" viewBox="0 0 7 4" fill="#444"><path d="M0 0H7L3.500 4z" /></svg>
        </div>
        <div className="ml-[10px]"><svg width="10" height="16" viewBox="0 0 10 16" fill="#333"><path d="M1 0v16L10 8z" /></svg></div>
        <div className="ml-[16px]"><Tb d="M0 1h2.500v14H0z M5 1h2v14H5z M9 1v14L16 8z" /></div>
        <svg width="20" height="20" viewBox="0 0 20 20" className="ml-[12px]" fill="none">
          <rect x="0.500" y="1.500" width="8" height="12" stroke="#999" fill="#fff" />
          <rect x="0.500" y="1.500" width="8" height="2.500" fill="#5279b0" />
          <rect x="7.500" y="9.500" width="12" height="10" stroke="#666" fill="#fff" />
          <path d="M17 4H11M14 1L11 4L14 7M13 4V9" stroke="#4a9a6e" strokeWidth="1.500" />
        </svg>
        <svg width="20" height="20" viewBox="0 0 20 20" className="ml-[10px]" fill="none">
          <rect x="1.500" y="1.500" width="9" height="13" stroke="#ccc" fill="#f5f5f5" />
          <rect x="6.500" y="6.500" width="13" height="12" stroke="#bbb" fill="#f5f5f5" />
          <rect x="6.500" y="6.500" width="13" height="2" fill="#b8c6dc" />
          <path d="M1 15H7M5 12.500L8 15L5 17.500" stroke="#b7d5c4" strokeWidth="1.500" />
        </svg>
        <div className="ml-[807px] w-[14px]">
          <DocIcon a="#999" b="M1.500 3.500h11v17h-11z M3.500 7.500h7M3.500 10.500h7M3.500 13.500h7M3.500 16.500h7" />
        </div>
        <div className="ml-[16px] w-[14px]">
          <DocIcon a="#999" b="M1.500 1.500h11v13h-11z M3.500 4.500h7M3.500 7.500h7M3.500 10.500h7 M1.500 17.500h11v6 M1.500 17.500v6" />
        </div>
        <div className="ml-[9px] w-[27px] h-[22px] bg-[#c5d8ee] flex items-center justify-center">
          <svg width="20" height="16" viewBox="0 0 20 16" fill="none" stroke="#8a97a8"><path d="M1.500 1.500h7.500v13h-7.500z M11 1.500h7.500v13h-7.500z M3 5h4.500M3 8h4.500M3 11h4.500M12.500 5h4.500M12.500 8h4.500M12.500 11h4.500" /></svg>
        </div>
        <div className="ml-[8px] w-[20px]">
          <DocIcon a="#aaa" b="M1 3.500h7M1 6.500h7M1 9.500h7M1 12.500h7M11 1.500h7M11 4.500h7M11 7.500h7M11 10.500h7M1 15.500h7v6M11 15.500h7M11 18.500h7M11 21.500h7M9.500 1v22" />
        </div>
        <span className="ml-[34px] w-[38px] text-[14px] text-[#333] font-['Open_Sans',sans-serif] whitespace-nowrap">100%</span>
        <svg width="7" height="4" viewBox="0 0 7 4" fill="#444" className="ml-[31px]"><path d="M0 0H7L3.500 4z" /></svg>
        <svg width="20" height="20" viewBox="0 0 20 20" className="ml-[5px]" fill="none" stroke="#555"><circle cx="10" cy="10" r="8.500" /><path d="M5 10H15" /></svg>
        <div className="ml-[8px] w-[115px] h-[1px] bg-[#444] relative">
          <div className="absolute left-[52px] -top-[6px] w-[6px] h-[12px] bg-[#333]" />
        </div>
        <svg width="20" height="20" viewBox="0 0 20 20" className="ml-[5px]" fill="none" stroke="#555"><circle cx="10" cy="10" r="8.500" /><path d="M5 10H15M10 5V15" /></svg>
      </div>
    </div>
  );
}

function VScroll() {
  return (
    <div className="w-[20px] bg-[#f0f0f0] flex flex-col items-center">
      <div className="w-[20px] h-[9px] bg-[#e2e2e2] border border-t-0 border-[#aaa]" />
      <svg width="12" height="8" viewBox="0 0 12 8" className="mt-[8px]" fill="none" stroke="#555" strokeWidth="1.500"><path d="M2 7L6 2L10 7" /></svg>
      <div className="mt-[869px] w-[20px] h-[177px] bg-[#d0d0d0]" />
    </div>
  );
}

export default function App() {
  return (
    <div className="w-[2560px] h-[1333px] overflow-hidden flex flex-col bg-white font-['Liberation_Sans',Arial,sans-serif]">
      <div className="h-[4px] bg-[#ececec] relative shrink-0">
        <div className="w-[79px] h-[4px] bg-[#f58a0b]" />
        <div className="absolute left-[2268px] top-0 w-[150px] h-[2px] bg-white border border-t-0 border-[#bbb]" />
      </div>
      <div className="flex-1 flex min-h-0">
        <div className="flex-1 bg-white relative min-w-0">
          <div className="w-[2540px] h-[1250px] border-r-2 border-[#444] relative overflow-hidden">
            <Schematic />
            <PartsTable />
            <div className="flex pl-[1127px] pt-[258px] h-[785px]">
              <div className="w-[600px] pt-[101px]">
                <WireTable />
                <div className="ml-[283px] mt-[20px]"><Warning /></div>
              </div>
              <div className="w-[812px] flex flex-col">
                <div className="flex h-[351px]">
                  <div className="pt-[45px]"><TwistedTable /></div>
                  <div className="ml-[201px] w-[363px] flex flex-col">
                    <Callout />
                    <div className="mt-[7px] flex justify-between">
                      <SymbolTable />
                      <AbbrevTable />
                    </div>
                  </div>
                </div>
                <TitleBlock />
              </div>
            </div>
            <Ruler />
          </div>
        </div>
        <VScroll />
      </div>
      <Toolbar />
    </div>
  );
}
